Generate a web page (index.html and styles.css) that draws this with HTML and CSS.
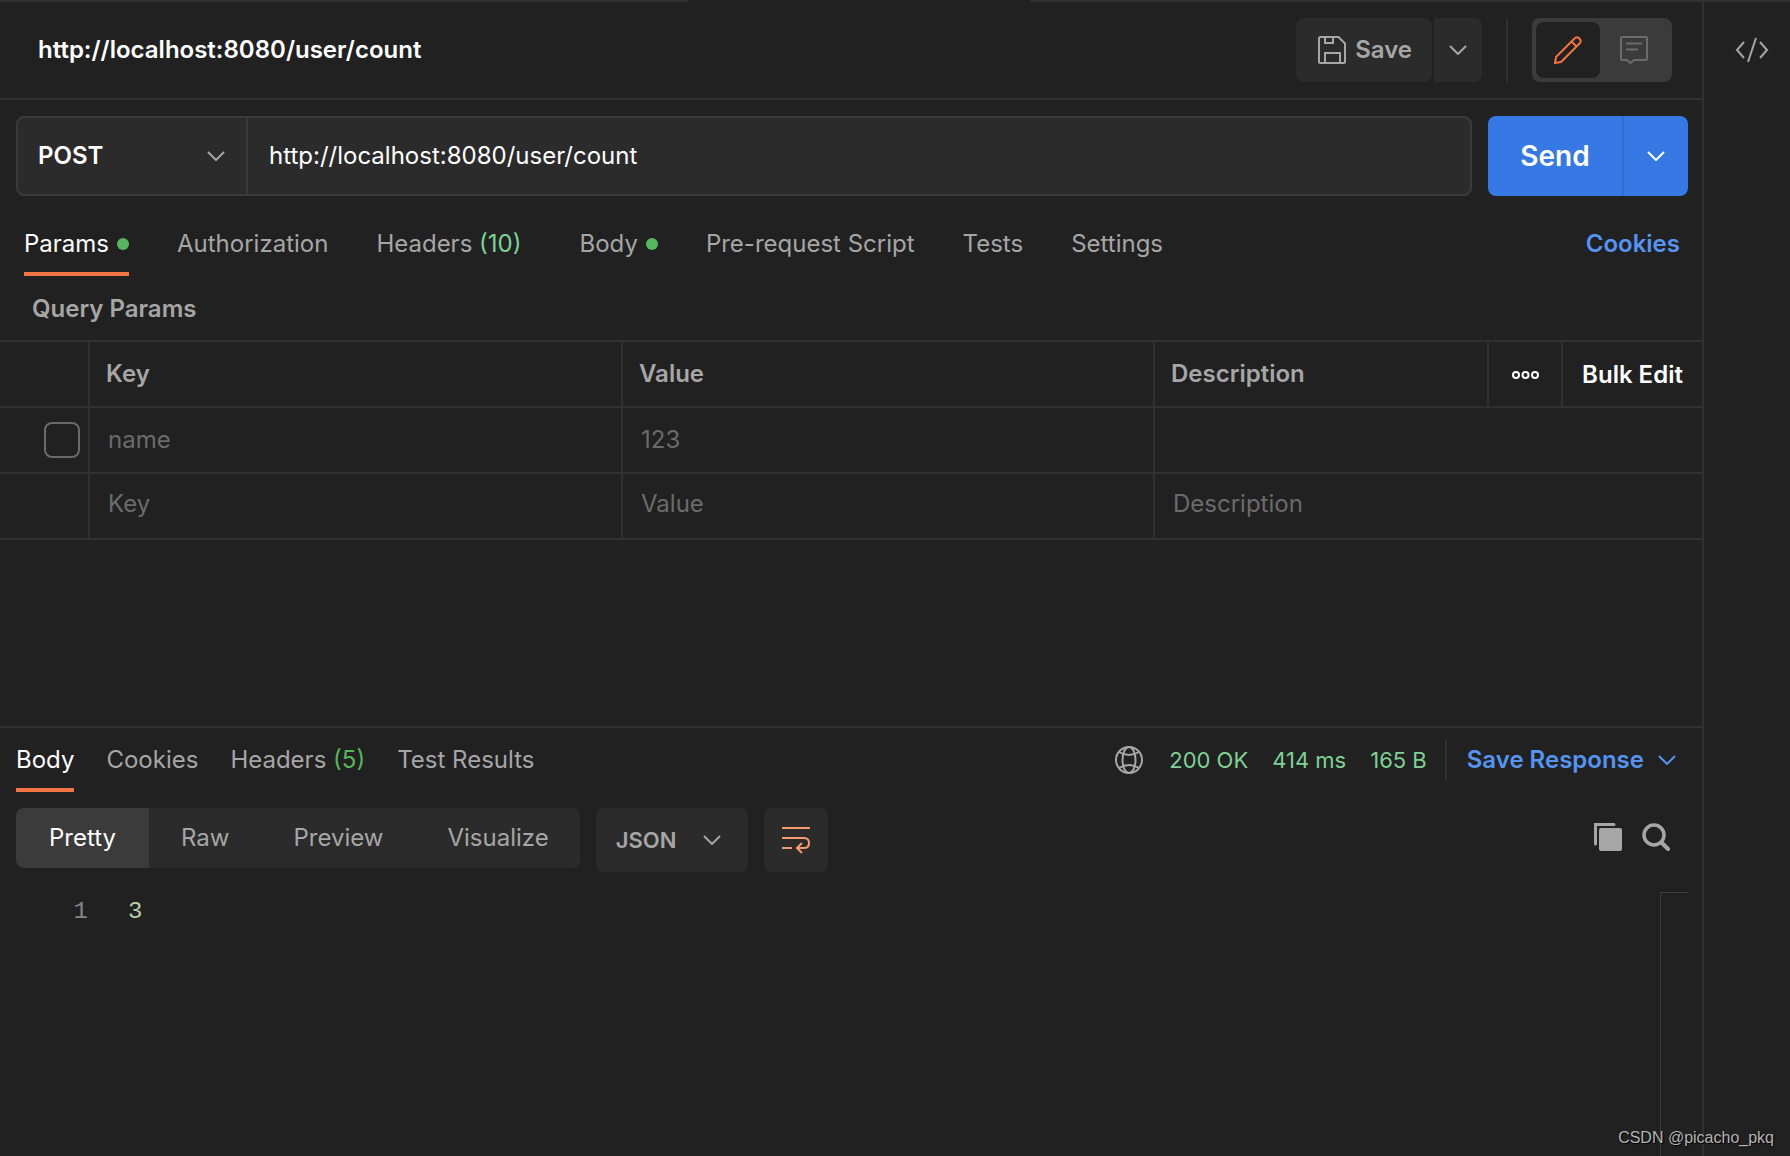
FILE: index.html
```html
<!DOCTYPE html>
<html lang="en">
<head>
<meta charset="utf-8">
<title>http://localhost:8080/user/count</title>
<link rel="stylesheet" href="styles.css">
</head>
<body>
<div class="app">
  <main class="workspace">
    <header class="titlebar">
      <h1 class="title">http://localhost:8080/user/count</h1>
      <div class="title-actions">
        <div class="save-group">
          <button class="save-btn" type="button">
            <svg class="icon" width="28" height="28" viewBox="0 0 28 28"><path d="M1 2.500Q1 1 2.500 1H20.500L27 7.500V25.500Q27 27 25.500 27H2.500Q1 27 1 25.500ZM7 1V7H15V1M7 27V17H22V27"/></svg>
            Save
          </button>
          <button class="save-more" type="button" aria-label="Save options"><svg class="icon" width="18" height="10" viewBox="0 0 18 10"><path d="M1 1L9 9L17 1"/></svg></button>
        </div>
        <span class="rule"></span>
        <div class="mode-toggle">
          <button class="mode mode-on" type="button" aria-label="Edit"><svg class="icon" width="28" height="28" viewBox="0 0 28 28"><path d="M1 27L2 21L21 2Q23 0.500 25 2.200L25.800 3Q27.500 5 26 7L7 26ZM17.500 5.500L22.500 10.500"/></svg></button>
          <button class="mode" type="button" aria-label="Comments"><svg class="icon" width="28" height="28" viewBox="0 0 28 28"><path d="M2 1H26Q27 1 27 2V23Q27 24 26 24H14L10.500 27L7 24H2Q1 24 1 23V2Q1 1 2 1ZM6 7.500H22M6 13.500H18"/></svg></button>
        </div>
      </div>
    </header>

    <form class="request-line">
      <div class="url-box">
        <div class="method">
          <select class="method-select" aria-label="Method"><option>POST</option><option>GET</option></select>
          <svg class="icon" width="18" height="10" viewBox="0 0 18 10"><path d="M1 1L9 9L17 1"/></svg>
        </div>
        <input class="url" type="text" aria-label="Request URL" value="http://localhost:8080/user/count">
      </div>
      <div class="send-group">
        <button class="send" type="button">Send</button>
        <button class="send-more" type="button" aria-label="Send options"><svg class="icon" width="18" height="10" viewBox="0 0 18 10"><path d="M1 1L9 9L17 1"/></svg></button>
      </div>
    </form>

    <nav class="tabs request-tabs">
      <a class="tab tab-on" href="#">Params<span class="dot"></span></a>
      <a class="tab" href="#">Authorization</a>
      <a class="tab tab-count" href="#">Headers <span class="count">(10)</span></a>
      <a class="tab" href="#">Body<span class="dot"></span></a>
      <a class="tab" href="#">Pre-request Script</a>
      <a class="tab" href="#">Tests</a>
      <a class="tab" href="#">Settings</a>
      <a class="cookies" href="#">Cookies</a>
    </nav>

    <h2 class="section-title">Query Params</h2>
    <table class="params">
      <colgroup><col class="c-check"><col class="c-key"><col class="c-value"><col><col class="c-more"><col class="c-bulk"></colgroup>
      <thead>
        <tr><th></th><th>Key</th><th>Value</th><th>Description</th>
          <th class="cell-center"><button class="plain" type="button" aria-label="Columns"><svg class="icon" width="29" height="10" viewBox="0 0 29 10"><circle cx="5" cy="5" r="3"/><circle cx="14.500" cy="5" r="3"/><circle cx="24" cy="5" r="3"/></svg></button></th>
          <th class="cell-center"><button class="plain" type="button">Bulk Edit</button></th></tr>
      </thead>
      <tbody>
        <tr><td class="cell-check"><input class="check" type="checkbox" aria-label="Enable name"></td><td>name</td><td>123</td><td colspan="3"></td></tr>
        <tr class="blank"><td></td>
          <td><input class="cell-input" aria-label="Key" placeholder="Key"></td>
          <td><input class="cell-input" aria-label="Value" placeholder="Value"></td>
          <td colspan="3"><input class="cell-input" aria-label="Description" placeholder="Description"></td></tr>
      </tbody>
    </table>

    <section class="response">
      <div class="response-head">
        <nav class="tabs response-tabs">
          <a class="tab tab-on" href="#">Body</a>
          <a class="tab" href="#">Cookies</a>
          <a class="tab" href="#">Headers <span class="count count-deep">(5)</span></a>
          <a class="tab" href="#">Test Results</a>
        </nav>
        <div class="status">
          <svg class="icon globe" width="28" height="28" viewBox="0 0 28 28"><circle cx="14" cy="14" r="13"/><ellipse cx="14" cy="14" rx="6.500" ry="13"/><path d="M4 6Q14 12 24 6M4 22Q14 16 24 22"/></svg>
          <span>200 OK</span><span>414 ms</span><span>165 B</span>
        </div>
        <button class="save-response" type="button">Save Response <svg class="icon" width="18" height="10" viewBox="0 0 18 10"><path d="M1 1L9 9L17 1"/></svg></button>
      </div>

      <div class="viewer-bar">
        <div class="segments">
          <button class="segment segment-on" type="button">Pretty</button>
          <button class="segment" type="button">Raw</button>
          <button class="segment" type="button">Preview</button>
          <button class="segment segment-last" type="button">Visualize</button>
        </div>
        <div class="format">
          <select class="format-select" aria-label="Format"><option>JSON</option><option>XML</option></select>
          <svg class="icon" width="18" height="10" viewBox="0 0 18 10"><path d="M1 1L9 9L17 1"/></svg>
        </div>
        <button class="wrap" type="button" aria-label="Wrap lines"><svg class="icon" width="28" height="28" viewBox="0 0 28 28"><path d="M0 2H28M0 12H22Q27 12 27 17Q27 22 22 22H15M0 22H10M20 17L15 22L20 27"/></svg></button>
        <div class="viewer-tools">
          <button class="plain" type="button" aria-label="Copy"><svg width="28" height="28" viewBox="0 0 28 28"><path fill="none" stroke="currentColor" stroke-width="3" stroke-linecap="round" d="M1.500 21V1.500H20"/><rect x="5" y="5" width="23" height="23" rx="2" fill="currentColor"/></svg></button>
          <button class="plain" type="button" aria-label="Search"><svg width="28" height="28" viewBox="0 0 28 28" fill="none" stroke="currentColor" stroke-width="3.500"><circle cx="12" cy="12" r="10"/><path stroke-width="4" stroke-linecap="round" d="M19.500 19.500L26 26"/></svg></button>
        </div>
      </div>

      <div class="code">
        <span class="line-number">1</span>
        <code class="code-line">3</code>
        <span class="ruler"></span>
      </div>
    </section>
  </main>

  <aside class="sidebar">
    <button class="plain" type="button" aria-label="Code"><svg class="icon" width="34" height="26" viewBox="0 0 34 26"><path d="M9 5L2 13L9 21M25 5L32 13L25 21M21 1L13 25"/></svg></button>
  </aside>
  <div class="open-tab"></div>
  <div class="watermark">CSDN @picacho_pkq</div>
</div>
</body>
</html>
```
FILE: styles.css
```css
:root {
  --bg: #212121;
  --panel: #2b2b2b;
  --line: #303030;
  --edge: #3b3b3b;
  --muted: #a6a6a6;
  --faint: #6b6b6b;
  --orange: #f37343;
  --blue: #5594f0;
  --mint: #7ed196;
  --green: #56b65b;
}

* { box-sizing: border-box; }

body {
  margin: 0;
  background: var(--bg);
  color: var(--muted);
  font: 24px/32px Inter, sans-serif;
  font-optical-sizing: none;
}

button, input, select { font: inherit; color: inherit; font-optical-sizing: none; }
button { border: 0; padding: 0; background: none; white-space: nowrap; }
a { color: inherit; text-decoration: none; }
svg { display: block; flex: none; }

.icon { fill: none; stroke: currentColor; stroke-width: 2; }

.app { position: relative; display: flex; min-height: 100vh; border-top: 2px solid var(--line); }
.open-tab { position: absolute; top: -2px; left: 688px; width: 342px; height: 2px; background: var(--bg); }
.workspace { flex: 1; min-width: 0; display: flex; flex-direction: column; }
.sidebar { width: 88px; border-left: 2px solid var(--line); display: flex; justify-content: center; align-items: flex-start; padding-top: 35px; padding-left: 10px; }
.plain { display: inline-flex; align-items: center; vertical-align: middle; font-weight: inherit; }

.titlebar { display: flex; justify-content: space-between; height: 98px; padding: 16px 30px 16px 38px; border-bottom: 2px solid var(--line); }
.title { margin: 0; font-size: 24px; line-height: 64px; font-weight: 600; color: #fff; }
.title-actions { display: flex; gap: 24px; }
.save-group { display: flex; gap: 2px; }
.save-btn { display: flex; align-items: center; gap: 9px; padding: 0 20px 0 22px; border-radius: 8px; background: var(--panel); font-weight: 600; }
.save-more { display: flex; align-items: center; justify-content: center; width: 48px; border-radius: 0 8px 8px 0; background: var(--panel); }
.rule { width: 2px; background: var(--line); }
.mode-toggle { display: flex; width: 140px; padding: 4px; border-radius: 8px; background: var(--edge); }
.mode { display: flex; align-items: center; justify-content: center; flex: 1; border-radius: 8px; color: var(--faint); }
.mode-on { flex: none; width: 64px; background: var(--bg); color: var(--orange); }

.request-line { display: flex; gap: 16px; height: 112px; padding: 16px 14px 16px 16px; }
.url-box { flex: 1; display: flex; border: 2px solid var(--edge); border-radius: 8px; background: var(--panel); overflow: hidden; }
.method { display: flex; align-items: center; width: 230px; padding-right: 21px; border-right: 2px solid var(--edge); }
.method-select, .format-select { flex: 1; min-width: 0; height: 100%; border: 0; outline: 0; background: transparent; appearance: none; font-weight: 600; }
.method-select { padding: 0 0 0 20px; color: #fff; }
.url { flex: 1; min-width: 0; padding: 0 21px; border: 0; outline: 0; background: transparent; color: #fff; }
.send-group { display: flex; width: 200px; border-radius: 8px; background: #3679e5; color: #fff; }
.send { flex: 1; font-size: 28px; font-weight: 600; }
.send-more { display: flex; align-items: center; justify-content: center; width: 66px; border-left: 2px solid #316dcf; }

.tabs { display: flex; }
.tab { display: flex; align-items: center; white-space: pre; border-bottom: 4px solid transparent; }
.tab-on { color: #fff; border-color: var(--orange); }
.dot { width: 12px; height: 12px; margin-left: 8px; border-radius: 50%; background: var(--green); }
.count { color: var(--mint); }
.count-deep { color: var(--green); }
.request-tabs { gap: 48px; height: 64px; padding: 0 22px 0 24px; }
.request-tabs .tab { padding-top: 4px; }
.request-tabs .tab-count { margin-right: 10px; }
.cookies { margin-left: auto; line-height: 64px; font-weight: 600; color: var(--blue); }

.section-title { margin: 0; padding: 17px 32px 15px; font-size: 24px; line-height: 32px; font-weight: 600; }

.params { width: 100%; border-spacing: 0; table-layout: fixed; border-top: 2px solid var(--line); }
.c-check { width: 90px; }
.c-key { width: 533px; }
.c-value { width: 532px; }
.c-more { width: 74px; }
.c-bulk { width: 139px; }
.params th, .params td { height: 66px; padding: 0 18px; border-bottom: 2px solid var(--line); border-right: 2px solid var(--line); text-align: left; font-weight: 400; color: var(--faint); }
.params th { padding: 0 16px; font-weight: 600; color: var(--muted); }
.params th:last-child, .params td:last-child { border-right: 0; }
.params .cell-center { padding: 0; text-align: center; color: #fff; }
.params .cell-check { padding: 0 8px 0 44px; }
.params .blank td { padding-bottom: 5px; }
.check { display: block; appearance: none; width: 36px; height: 36px; margin: 0; border: 2px solid var(--faint); border-radius: 8px; }
.cell-input { display: block; width: 100%; padding: 0; border: 0; outline: 0; background: none; }
.cell-input::placeholder { color: var(--faint); opacity: 1; }

.response { flex: 1; display: flex; flex-direction: column; margin-top: 186px; border-top: 2px solid var(--line); }
.response-head { display: flex; align-items: center; height: 64px; padding: 0 26px 0 16px; }
.response-tabs { gap: 32px; height: 64px; }
.response-tabs .tab { padding-top: 4px; }
.status { display: flex; align-items: center; gap: 24px; margin-left: auto; font-size: 22px; color: var(--mint); }
.globe { margin-right: 2px; color: var(--muted); }
.save-response { display: flex; align-items: center; gap: 14px; height: 40px; margin-left: 18px; padding-left: 20px; border-left: 2px solid var(--line); font-weight: 600; color: var(--blue); }

.viewer-bar { display: flex; align-items: flex-start; gap: 16px; padding: 16px 32px 0 16px; }
.segments { display: flex; height: 60px; border-radius: 8px; background: var(--panel); overflow: hidden; }
.segment { padding: 0 32px; }
.segment-on { min-width: 133px; background: var(--edge); color: #fff; }
.segment-last { padding-right: 31px; }
.format { display: flex; align-items: center; width: 152px; height: 64px; padding: 0 27px 0 20px; border-radius: 8px; background: var(--panel); }
.format-select { padding: 0; font-size: 22px; }
.wrap { display: flex; align-items: center; justify-content: center; width: 64px; height: 64px; border-radius: 8px; background: var(--panel); color: #f79a6f; }
.viewer-tools { display: flex; gap: 20px; margin-left: auto; padding-top: 15px; }

.code { flex: 1; display: flex; padding: 20px 14px 0 0; font: 24px/40px "Liberation Mono", monospace; }
.line-number { width: 88px; text-align: right; color: #858585; }
.code-line { flex: 1; padding-left: 40px; font: inherit; color: #b5cea8; }
.ruler { width: 28px; border: 1px solid #3c3c3c; border-width: 1px 0 0 1px; }

.watermark { position: absolute; right: 16px; bottom: 8px; font: 16px/20px "Liberation Sans", sans-serif; color: #b4b4b4; text-shadow: 1px 1px 1px #000; }
```
